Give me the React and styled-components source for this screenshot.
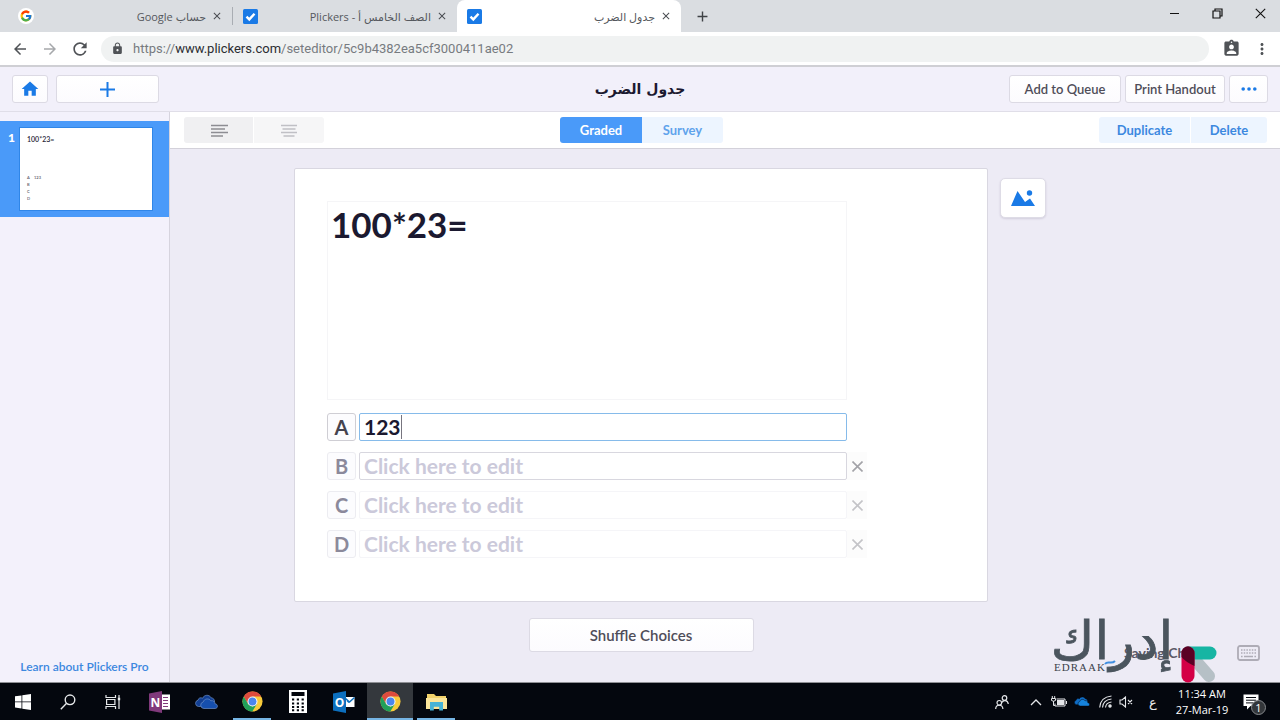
import React, { useState } from "react";
import styled, { createGlobalStyle } from "styled-components";
import { FcGoogle } from "react-icons/fc";
import {
  MdArrowBack,
  MdArrowForward,
  MdRefresh,
  MdLock,
  MdAssignmentInd,
  MdMoreVert,
  MdAdd,
  MdClose,
  MdHome,
} from "react-icons/md";

const GlobalStyle = createGlobalStyle`
  * { box-sizing: border-box; }
  body { margin: 0; overflow: hidden; }
  button, input, textarea { font-family: inherit; margin: 0; }
  button { padding: 0; border: 0; background: none; cursor: pointer; }
  svg { display: block; }
`;

const Screen = styled.div`
  position: relative;
  display: flex;
  flex-direction: column;
  height: 100vh;
  font-family: Lato, "DejaVu Sans", sans-serif;
  color: #1b1930;
  background: #edebf5;
`;

/* browser */

const TabBar = styled.div`
  display: flex;
  flex: none;
  height: 32px;
  padding-left: 8px;
  background: #dadde1;
  font-family: "Open Sans", "DejaVu Sans", sans-serif;
`;

const Tab = styled.div`
  display: flex;
  align-items: center;
  gap: 5px;
  width: 224px;
  padding: 0 9px 0 10px;
  border-radius: 8px 8px 0 0;
  background: ${(p) => (p.$active ? "#fff" : "none")};
  color: #55585d;
`;

const TabDivider = styled.div`
  width: 1px;
  height: 18px;
  margin: 7px 0;
  background: #a9adb3;
`;

const TabTitle = styled.span`
  flex: 1;
  font-size: 11px;
  white-space: nowrap;
`;

const TabClose = styled.button`
  display: flex;
  color: #4a4d52;
`;

const NewTab = styled.button`
  width: 42px;
  display: flex;
  align-items: center;
  justify-content: center;
  color: #3f4246;
`;

const WindowButtons = styled.div`
  display: flex;
  gap: 3px;
  margin-left: auto;
`;

const WindowButton = styled.button`
  display: flex;
  justify-content: center;
  width: 40px;
  height: 27px;
  align-items: center;
`;

const AddressBar = styled.div`
  display: flex;
  flex: none;
  align-items: center;
  height: 35px;
  padding: 0 9px;
  background: #fff;
  border-bottom: 2px solid #cfcfd4;
`;

const NavButton = styled.button`
  display: flex;
  justify-content: center;
  width: ${(p) => p.$width || 30}px;
  margin-left: ${(p) => p.$gap || 0}px;
  color: ${(p) => (p.$off ? "#a6a8ab" : "#505357")};
`;

const Url = styled.div`
  display: flex;
  flex: 1;
  align-items: center;
  gap: 9px;
  height: 26px;
  margin: 0 8px 0 10px;
  padding-left: 10px;
  border-radius: 13px;
  background: #f0f2f2;
  color: #777b80;
  font-family: Roboto, sans-serif;
  font-size: 13px;

  b { font-weight: 400; color: #2b2d31; }
`;

/* plickers header */

const Header = styled.header`
  display: grid;
  grid-template-columns: 1fr auto 1fr;
  flex: none;
  align-items: center;
  height: 45px;
  padding: 0 12px;
  background: #f2f0fa;
  border-bottom: 1px solid #e0dee8;
`;

const HeaderGroup = styled.div`
  display: flex;
  gap: ${(p) => p.$gap}px;
  justify-content: ${(p) => (p.$end ? "flex-end" : "flex-start")};
`;

const Title = styled.h1`
  margin: 0;
  font-family: "DejaVu Sans", sans-serif;
  font-size: 14px;
  font-weight: 700;
`;

const WhiteButton = styled.button`
  display: flex;
  align-items: center;
  justify-content: center;
  width: ${(p) => p.$width}px;
  height: ${(p) => p.$height || 28}px;
  border: 1px solid #dcdae4;
  border-radius: 3px;
  background: linear-gradient(#fff, #fcfbfe);
  color: ${(p) => (p.$blue ? "#1a7ae6" : "#4f4d59")};
  font-size: ${(p) => p.$font || 13}px;
  font-weight: 600;
  white-space: nowrap;
`;

/* body */

const Body = styled.div`
  display: flex;
  flex: 1;
  min-height: 0;
`;

const Sidebar = styled.aside`
  display: flex;
  flex-direction: column;
  flex: none;
  width: 170px;
  padding-top: 9px;
  background: #f3f1fb;
  border-right: 1px solid #d6d4de;
`;

const Slide = styled.button`
  display: flex;
  gap: 4px;
  padding: 6px 16px 6px 8px;
  background: #4a9af9;
  color: #fff;
  text-align: left;
`;

const SlideNumber = styled.span`
  width: 7px;
  padding-top: 4px;
  font-size: 12px;
  line-height: 14px;
  font-weight: 900;
`;

const Thumb = styled.span`
  display: flex;
  flex: 1;
  flex-direction: column;
  justify-content: space-between;
  height: 84px;
  padding: 7px 7px 8px;
  background: #fff;
  border: 1px solid #2f86e8;
  color: #2a2838;
  font-size: 7px;
  line-height: 8px;
  font-weight: 600;
`;

const ThumbChoices = styled.span`
  display: grid;
  grid-template-columns: 7px 1fr;
  font-size: 4px;
  line-height: 7px;
  color: #5c5a6b;
`;

const ProLink = styled.a`
  margin: auto 0 7px;
  font-size: 12px;
  line-height: 16px;
  font-weight: 600;
  text-align: center;
  text-decoration: none;
  color: #3c88df;
`;

const Main = styled.main`
  position: relative;
  display: flex;
  flex: 1;
  flex-direction: column;
  min-width: 0;
`;

const Toolbar = styled.div`
  display: grid;
  grid-template-columns: 1fr auto 1fr 168px;
  flex: none;
  align-items: center;
  height: 37px;
  padding: 0 13px 0 14px;
  background: #fff;
  border-bottom: 1px solid #d3d1da;
`;

const ToolGroup = styled.div`
  display: flex;
  gap: ${(p) => p.$gap || 0}px;
  overflow: hidden;
  border-radius: 3px;
  justify-self: ${(p) => (p.$end ? "end" : "start")};
  grid-column: ${(p) => (p.$end ? "3 / 5" : "auto")};
`;

const toolColors = {
  dark: ["#f0f0f2", "#8d8d93"],
  faint: ["#f6f6f7", "#c0c0c5"],
  active: ["#4a9af9", "#fff"],
  soft: ["#edf5ff", "#5fa3ec"],
  action: ["#edf5ff", "#3c88df"],
};

const ToolButton = styled.button`
  display: flex;
  align-items: center;
  justify-content: center;
  width: ${(p) => p.$width}px;
  height: 26px;
  background: ${(p) => toolColors[p.$kind][0]};
  color: ${(p) => toolColors[p.$kind][1]};
  font-size: 13px;
  font-weight: 700;
`;

const Canvas = styled.div`
  display: grid;
  grid-template-columns: 1fr minmax(0, 694px) 1fr;
  padding: 19px 168px 0 0;
  row-gap: 16px;
`;

const Card = styled.section`
  grid-column: 2;
  padding: 32px 140px 43px 32px;
  background: #fff;
  border: 1px solid #d9d7e1;
  border-radius: 2px;
`;

const Question = styled.textarea`
  display: block;
  width: 100%;
  height: 199px;
  margin-bottom: 13px;
  padding: 0 3px;
  border: 1px solid #f5f5f7;
  outline: 0;
  resize: none;
  color: #1b1930;
  font-size: 35px;
  line-height: 44px;
  font-weight: 700;
`;

const Choice = styled.div`
  display: flex;
  width: calc(100% + 20px);
  margin-top: 11px;
`;

const Letter = styled.label`
  flex: none;
  width: 29px;
  height: 28px;
  margin-right: 3px;
  border: 1px solid ${(p) => (p.$filled ? "#cfced4" : "#ececf1")};
  border-radius: 3px;
  background: #fcfcfe;
  color: ${(p) => (p.$filled ? "#45434f" : "#8b899b")};
  font-size: 20px;
  line-height: 26px;
  font-weight: 700;
  text-align: center;
`;

const Field = styled.div`
  position: relative;
  flex: 1;
`;

const borders = { focus: "#86bbea", hover: "#d8d7df", idle: "#f5f5f8" };

const Answer = styled.input`
  display: block;
  width: 100%;
  height: 28px;
  padding: 0 4px 2px;
  border: 1px solid ${(p) => borders[p.$look]};
  border-radius: 2px;
  outline: 0;
  color: #1b1930;
  font-size: 21px;
  font-weight: 700;

  &::placeholder { color: #cbc9da; opacity: 1; }
`;

const Caret = styled.span`
  position: absolute;
  top: 2px;
  left: 42px;
  width: 1px;
  height: 24px;
  background: #77757f;
`;

const RemoveChoice = styled.button`
  display: flex;
  align-items: center;
  justify-content: center;
  width: 20px;
  background: #fcfcfc;
  color: ${(p) => (p.$strong ? "#a3a3a8" : "#c4c4c8")};
  visibility: ${(p) => (p.$hidden ? "hidden" : "visible")};
`;

const ImageButton = styled.button`
  display: flex;
  align-items: center;
  justify-content: center;
  width: 46px;
  height: 40px;
  margin: 10px 0 0 12px;
  border: 1px solid #dedce6;
  border-radius: 5px;
  background: #fff;
  box-shadow: 0 1px 2px rgba(60, 50, 90, 0.15);
`;

const Shuffle = styled.div`
  grid-column: 2;
  display: flex;
  justify-content: center;
`;

/* floats over the canvas corner */
const Status = styled.div`
  position: absolute;
  right: 20px;
  bottom: 20px;
  display: flex;
  align-items: center;
  justify-content: space-between;
  width: 136px;
  color: #5b5967;
  font-size: 14px;
  line-height: 18px;
  font-weight: 700;
`;

const Watermark = styled.div`
  position: absolute;
  right: 62px;
  bottom: 37px;
  pointer-events: none;
`;

/* windows taskbar */

const Taskbar = styled.footer`
  display: flex;
  flex: none;
  height: 38px;
  background: #04070e;
  border-top: 1px solid #8f9095;
  color: #fff;
  font-family: "Open Sans", "DejaVu Sans", sans-serif;
`;

const Apps = styled.div`
  display: flex;
  margin-left: ${(p) => p.$gap || 0}px;
`;

const AppButton = styled.button`
  display: flex;
  align-items: center;
  justify-content: center;
  width: ${(p) => p.$width || 46}px;
  background-color: ${(p) => (p.$active ? "#34383d" : "transparent")};
  background-image: ${(p) => (p.$open ? "linear-gradient(#76b5e4, #76b5e4)" : "none")};
  background-repeat: no-repeat;
  background-position: center bottom;
  background-size: ${(p) => (p.$active ? 46 : 38)}px 2px;
`;

const Tray = styled.div`
  display: flex;
  align-items: center;
  margin-left: auto;
  padding-right: 12px;
`;

const TrayButton = styled.button`
  position: relative;
  display: flex;
  align-items: center;
  justify-content: center;
  width: ${(p) => p.$width}px;
  color: #e4e6e9;
  font-size: 13px;
`;

const Clock = styled.time`
  width: 64px;
  font-size: 11px;
  line-height: 16px;
  text-align: center;
  white-space: nowrap;
`;

const Count = styled.span`
  position: absolute;
  top: 6px;
  left: 17px;
  width: 15px;
  height: 15px;
  border: 1px solid #85888c;
  border-radius: 50%;
  background: #33363a;
  color: #fff;
  font-size: 11px;
  line-height: 13px;
`;

const CheckFavicon = () => (
  <svg width="15" height="15" viewBox="0 0 15 15">
    <rect width="15" height="15" rx="1.5" fill="#1a7ae6" />
    <path d="M3.5 7.6l2.8 2.8 5.2-5.6" fill="none" stroke="#fff" strokeWidth="2.4" />
  </svg>
);

const GoogleFavicon = () => (
  <svg width="16" height="16" viewBox="0 0 16 16">
    <circle cx="8" cy="8" r="8" fill="#fff" />
    <FcGoogle x="1.5" y="1.5" size={13} />
  </svg>
);

const LinesIcon = ({ center }) => (
  <svg width="18" height="13" viewBox="0 0 18 13" stroke="currentColor" strokeWidth="1.6">
    <path
      d={
        center
          ? "M1 1.5h16M2.5 5h13M1 8.5h16M3.5 12h11"
          : "M1 1.5h17M1 5h14M1 8.5h17M1 12h12"
      }
    />
  </svg>
);

const DotsIcon = () => (
  <svg width="16" height="4" viewBox="0 0 16 4" fill="#1a7ae6">
    <circle cx="2.2" cy="2" r="1.8" />
    <circle cx="8" cy="2" r="1.8" />
    <circle cx="13.8" cy="2" r="1.8" />
  </svg>
);

const PictureIcon = () => (
  <svg width="24" height="16" viewBox="0 0 24 16" fill="#1a7ae6">
    <path d="M0 16L6.5 1 14 12l5-3.5 5 7.5z" />
    <circle cx="18.5" cy="3" r="2.7" />
  </svg>
);

const KeyboardIcon = () => (
  <svg width="23" height="16" viewBox="0 0 23 16" fill="none" stroke="#aeacb6">
    <rect x="1" y="1" width="21" height="14" rx="2" strokeWidth="1.8" />
    <path d="M4 5h15M4 8h15" strokeWidth="1.5" strokeDasharray="1.5 1.2" />
    <path d="M4 11.5h1.6M7 11.5h9M17.4 11.5h1.6" strokeWidth="1.5" />
  </svg>
);

const EdraakLogo = () => (
  <svg width="168" height="80" viewBox="0 0 168 80">
    <text x="62" y="56" textAnchor="middle" fontFamily="DejaVu Sans" fontSize="53" fill="#4b555e" stroke="#4b555e" strokeWidth=".8">
      إدراك
    </text>
    <text x="4" y="68" fontFamily="Liberation Serif" fontSize="11" letterSpacing="1" fill="#3b424a">
      EDRAAK
    </text>
    <path d="M55 61c3-4 6 1 10-3" fill="none" stroke="#3f8ee0" strokeWidth="2" />
    <path d="M138 49l21 24" stroke="#b6c0c6" strokeWidth="12" strokeLinecap="round" />
    <path d="M138 50h22" stroke="#17b5a3" strokeWidth="13" strokeLinecap="round" />
    <path d="M138 50v23" stroke="#d40046" strokeWidth="13" strokeLinecap="round" />
    <path d="M131.500 50a6.500 6.500 0 0 1 13 0v13q-9-4-13-9z" fill="#5a0024" />
  </svg>
);

const ChromeIcon = () => (
  <svg width="21" height="21" viewBox="0 0 48 48">
    <circle cx="24" cy="24" r="23" fill="#f8cb3b" />
    <path d="M4 12.6A23 23 0 0 1 44 12.500H24L14 29.700z" fill="#dd4b3e" />
    <path d="M4 12.600A23 23 0 0 0 23.500 47L34 29.700 24 35.500 14 29.700z" fill="#21a05a" />
    <circle cx="24" cy="24" r="11.500" fill="#f3f3f3" />
    <circle cx="24" cy="24" r="9" fill="#4a86ee" />
  </svg>
);

const WindowsIcon = () => (
  <svg width="16" height="16" viewBox="0 0 16 16" fill="#fff">
    <path d="M0 2.300l6.500-.9v6.100H0zM7.300 1.300L16 0v7.500H7.300zM0 8.300h6.500v6.200L0 13.600zM7.300 8.300H16V16l-8.700-1.300z" />
  </svg>
);

const SearchIcon = () => (
  <svg width="16" height="16" viewBox="0 0 16 16" fill="none" stroke="#e6e8ea" strokeWidth="1.400">
    <circle cx="10" cy="5.800" r="4.800" />
    <path d="M6.600 9.300L.8 15.200" />
  </svg>
);

const TaskViewIcon = () => (
  <svg width="16" height="16" viewBox="0 0 16 16" fill="none" stroke="#e6e8ea" strokeWidth="1.200">
    <path d="M1 1v2.500h9.500V1M1 15v-2.500h9.500V15M1.600 5.500h8.300v5H1.600zM14 1v14" />
    <path d="M12.800 5h2.400" strokeWidth="2.500" />
  </svg>
);

const OneNoteIcon = () => (
  <svg width="22" height="22" viewBox="0 0 22 22">
    <rect x="11" y="3.500" width="10" height="15" fill="#fff" />
    <path d="M14 6.500h5M14 9.500h5M14 12.500h5M14 15.500h5" stroke="#80397b" strokeWidth="1" />
    <path d="M0 2.500L13 0v22L0 19.500z" fill="#80397b" />
    <text x="6.500" y="15.500" textAnchor="middle" fontFamily="Open Sans" fontWeight="700" fontSize="12" fill="#fff">N</text>
  </svg>
);

const OutlookIcon = () => (
  <svg width="22" height="22" viewBox="0 0 22 22">
    <rect x="11" y="6" width="10.500" height="10" fill="#fff" />
    <path d="M12 7l4.500 4 5-4.500M14 9.500l2 2" stroke="#0c6fbe" strokeWidth="1.500" fill="none" />
    <path d="M0 2.500L13 0v22L0 19.500z" fill="#0c6fbe" />
    <text x="6.500" y="15.500" textAnchor="middle" fontFamily="Open Sans" fontWeight="700" fontSize="12" fill="#fff">O</text>
  </svg>
);

const CloudIcon = ({ width = 23, back = "#123f94", front = "#164fae", line = "#6d8fc6" }) => (
  <svg width={width} height={(width * 15) / 23} viewBox="0 0 23 15" stroke={line} strokeWidth=".7">
    <path d="M5 12.500H3.500a3.200 3.200 0 0 1-.5-6.300C3.300 4 6 3 7.500 4.300 9 .8 14 0 16.200 3.800 18.500 4 20 6 19.500 8z" fill={back} />
    <path d="M9 14.500a3.300 3.300 0 0 1-.8-6.500c.5-3 5.500-4.500 7.600-1.200 2.500-.7 4.200 1 4.100 2.900 3.200.2 3.400 4.600.3 4.800z" fill={front} />
  </svg>
);

const CalculatorIcon = () => (
  <svg width="18" height="23" viewBox="0 0 18 23">
    <rect width="18" height="23" fill="#fff" />
    <rect x="2.500" y="2" width="13" height="4" fill="#04070e" />
    <path d="M3 9.500h12M3 13.500h12M3 17h12M3 20.300h12" stroke="#04070e" strokeWidth="2" strokeDasharray="2.200 2.600" />
  </svg>
);

const FolderIcon = () => (
  <svg width="21" height="18" viewBox="0 0 21 18">
    <path d="M1 1h7l2 2h10v13H1z" fill="#f2d26a" />
    <path d="M0 5h21v11H0z" fill="#fbe59a" />
    <path d="M4 9h13v8.500h-3.800v-3.700H7.800v3.700H4z" fill="#46b3d6" />
  </svg>
);

const PeopleIcon = () => (
  <svg width="14" height="14" viewBox="0 0 14 14" fill="none" stroke="currentColor" strokeWidth="1.200">
    <circle cx="9.500" cy="3" r="2.300" />
    <path d="M7 7.500c1-2.500 5.500-3 6.300 1.500" />
    <circle cx="4.300" cy="7.800" r="2.300" />
    <path d="M.7 14c0-5 7-5 7.200 0" />
  </svg>
);

const ChevronIcon = () => (
  <svg width="12" height="8" viewBox="0 0 12 8" fill="none" stroke="currentColor" strokeWidth="1.300">
    <path d="M1 7l5-5 5 5" />
  </svg>
);

const BatteryIcon = () => (
  <svg width="16" height="12" viewBox="0 0 16 12" fill="none" stroke="currentColor">
    <path d="M5.500 3h8.500v7H4V7.500M15.500 5v3M1.300 0v2M3.700 0v2" />
    <path d="M.5 2.500h4v2q-2 1.500-4 0zM2.500 5v4.500H4" />
    <path d="M6 6.500h7" strokeWidth="5" />
  </svg>
);

const WifiIcon = () => (
  <svg width="13" height="13" viewBox="0 0 13 13" fill="none" stroke="currentColor" strokeWidth="1.100">
    <path d="M.7 12.500Q1.500 2 12.500 1M3.500 12.500Q4 5 12.500 4M6.500 12.500Q7 7.700 12.500 7" />
    <circle cx="11" cy="11" r="1.200" fill="currentColor" />
  </svg>
);

const MutedIcon = () => (
  <svg width="14" height="12" viewBox="0 0 14 12" fill="none" stroke="currentColor" strokeWidth="1.100">
    <path d="M1 4h2l3.500-3v10L3 8H1zM9 4l4 4M13 4L9 8" />
  </svg>
);

const NotesIcon = () => (
  <svg width="16" height="16" viewBox="0 0 16 16">
    <path d="M.5.500h15v11.500h-8L4 15.500V12H.5z" fill="#fff" />
    <path d="M3 3.500h10M3 6.200h10M3 8.900h7" stroke="#04070e" />
  </svg>
);

const MinimizeIcon = () => (
  <svg width="11" height="11" viewBox="0 0 11 11" fill="none" stroke="#111">
    <path d="M1 5.500h9" />
  </svg>
);

const RestoreIcon = () => (
  <svg width="11" height="11" viewBox="0 0 11 11" fill="none" stroke="#111" strokeWidth="1.200">
    <path d="M1 3h7v7H1zM3 3V1h7v7H8" />
  </svg>
);

const QuitIcon = () => (
  <svg width="11" height="11" viewBox="0 0 11 11" fill="none" stroke="#111" strokeWidth="1.100">
    <path d="M.8.800l9.400 9.400M10.200.800L.8 10.200" />
  </svg>
);

const tabs = [
  { title: "حساب Google", icon: <GoogleFavicon /> },
  { title: "الصف الخامس أ - Plickers", icon: <CheckFavicon /> },
  { title: "جدول الضرب", icon: <CheckFavicon />, active: true },
];

const letters = ["A", "B", "C", "D"];

const looks = ["focus", "hover", "idle", "idle"];

const apps = [
  { name: "OneNote", icon: <OneNoteIcon /> },
  { name: "OneDrive", icon: <CloudIcon /> },
  { name: "Chrome", icon: <ChromeIcon />, open: true },
  { name: "Calculator", icon: <CalculatorIcon /> },
  { name: "Outlook", icon: <OutlookIcon /> },
  { name: "Chrome window", icon: <ChromeIcon />, open: true, active: true },
  { name: "Explorer", icon: <FolderIcon />, open: true },
];

const App = () => {
  const [question, setQuestion] = useState("100*23=");
  const [answers, setAnswers] = useState(["123", "", "", ""]);

  const changeAnswer = (index, value) => {
    setAnswers(answers.map((item, i) => (i === index ? value : item)));
  };

  return (
    <Screen>
      <GlobalStyle />
      <TabBar>
        {tabs.map((tab, i) => (
          <React.Fragment key={tab.title}>
            <Tab $active={tab.active}>
              {tab.icon}
              <TabTitle dir="rtl">{tab.title}</TabTitle>
              <TabClose aria-label="Close tab"><MdClose size={12} /></TabClose>
            </Tab>
            {i === 0 && <TabDivider />}
          </React.Fragment>
        ))}
        <NewTab aria-label="New tab"><MdAdd size={17} /></NewTab>
        <WindowButtons>
          <WindowButton aria-label="Minimize"><MinimizeIcon /></WindowButton>
          <WindowButton aria-label="Restore"><RestoreIcon /></WindowButton>
          <WindowButton aria-label="Close"><QuitIcon /></WindowButton>
        </WindowButtons>
      </TabBar>

      <AddressBar>
        <NavButton $width={22} aria-label="Back"><MdArrowBack size={18} /></NavButton>
        <NavButton $width={22} $gap={8} $off aria-label="Forward"><MdArrowForward size={18} /></NavButton>
        <NavButton $width={22} $gap={8} aria-label="Reload"><MdRefresh size={20} /></NavButton>
        <Url>
          <MdLock size={13} color="#505357" />
          <span>https://<b>www.plickers.com</b>/seteditor/5c9b4382ea5cf3000411ae02</span>
        </Url>
        <NavButton $width={28} aria-label="Profile"><MdAssignmentInd size={19} /></NavButton>
        <NavButton $width={18} $gap={8} aria-label="Menu"><MdMoreVert size={18} /></NavButton>
      </AddressBar>

      <Header>
        <HeaderGroup $gap={8}>
          <WhiteButton $width={36} $blue aria-label="Home"><MdHome size={20} /></WhiteButton>
          <WhiteButton $width={103} $blue aria-label="New question">
            <svg width="15" height="15" viewBox="0 0 15 15" stroke="currentColor" strokeWidth="2">
              <path d="M7.500 0v15M0 7.500h15" />
            </svg>
          </WhiteButton>
        </HeaderGroup>
        <Title dir="rtl">جدول الضرب</Title>
        <HeaderGroup $gap={4} $end>
          <WhiteButton $width={112}>Add to Queue</WhiteButton>
          <WhiteButton $width={100}>Print Handout</WhiteButton>
          <WhiteButton $width={39} aria-label="More"><DotsIcon /></WhiteButton>
        </HeaderGroup>
      </Header>

      <Body>
        <Sidebar>
          <Slide>
            <SlideNumber>1</SlideNumber>
            <Thumb>
              {question}
              <ThumbChoices>
                {letters.map((letter, i) => (
                  <React.Fragment key={letter}>
                    <span>{letter}</span>
                    <span>{answers[i]}</span>
                  </React.Fragment>
                ))}
              </ThumbChoices>
            </Thumb>
          </Slide>
          <ProLink href="#pro">Learn about Plickers Pro</ProLink>
        </Sidebar>

        <Main>
          <Toolbar>
            <ToolGroup $gap={1}>
              <ToolButton $width={69} $kind="dark" aria-label="Align left"><LinesIcon /></ToolButton>
              <ToolButton $width={70} $kind="faint" aria-label="Align center"><LinesIcon center /></ToolButton>
            </ToolGroup>
            <ToolGroup>
              <ToolButton $width={82} $kind="active">Graded</ToolButton>
              <ToolButton $width={81} $kind="soft">Survey</ToolButton>
            </ToolGroup>
            <ToolGroup $gap={1} $end>
              <ToolButton $width={91} $kind="action">Duplicate</ToolButton>
              <ToolButton $width={76} $kind="action">Delete</ToolButton>
            </ToolGroup>
          </Toolbar>

          <Canvas>
            <Card>
              <Question
                aria-label="Question"
                spellCheck={false}
                value={question}
                onChange={(e) => setQuestion(e.target.value)}
              />
              {letters.map((letter, i) => (
                <Choice key={letter}>
                  <Letter htmlFor={"answer" + letter} $filled={i === 0}>{letter}</Letter>
                  <Field>
                    <Answer
                      id={"answer" + letter}
                      $look={looks[i]}
                      placeholder="Click here to edit"
                      value={answers[i]}
                      onChange={(e) => changeAnswer(i, e.target.value)}
                    />
                    {i === 0 && <Caret />}
                  </Field>
                  <RemoveChoice $hidden={i === 0} $strong={i === 1} aria-label="Remove choice">
                    <svg width="11" height="11" viewBox="0 0 11 11" stroke="currentColor" strokeWidth="1.600">
                      <path d="M.5.500l10 10M10.500.500l-10 10" />
                    </svg>
                  </RemoveChoice>
                </Choice>
              ))}
            </Card>
            <ImageButton aria-label="Add image"><PictureIcon /></ImageButton>
            <Shuffle>
              <WhiteButton $width={225} $height={34} $font={15}>Shuffle Choices</WhiteButton>
            </Shuffle>
          </Canvas>

          <Status>
            <span>Saving Ch</span>
            <KeyboardIcon />
          </Status>
        </Main>
      </Body>

      <Watermark><EdraakLogo /></Watermark>

      <Taskbar>
        <Apps>
          <AppButton $width={45} aria-label="Start"><WindowsIcon /></AppButton>
          <AppButton $width={45} aria-label="Search"><SearchIcon /></AppButton>
          <AppButton $width={45} aria-label="Task view"><TaskViewIcon /></AppButton>
        </Apps>
        <Apps $gap={2}>
          {apps.map((app) => (
            <AppButton key={app.name} $open={app.open} $active={app.active} aria-label={app.name}>
              {app.icon}
            </AppButton>
          ))}
        </Apps>
        <Tray>
          <TrayButton $width={44} aria-label="People"><PeopleIcon /></TrayButton>
          <TrayButton $width={24} aria-label="Hidden icons"><ChevronIcon /></TrayButton>
          <TrayButton $width={22} aria-label="Battery"><BatteryIcon /></TrayButton>
          <TrayButton $width={24} aria-label="OneDrive status">
            <CloudIcon width={16} back="#0f6cc4" front="#1683dc" line="#04070e" />
          </TrayButton>
          <TrayButton $width={22} aria-label="Network"><WifiIcon /></TrayButton>
          <TrayButton $width={20} aria-label="Volume"><MutedIcon /></TrayButton>
          <TrayButton $width={34}>ع</TrayButton>
          <Clock>
            11:34 AM<br />27-Mar-19
          </Clock>
          <TrayButton $width={34} aria-label="Notifications">
            <NotesIcon />
            <Count>1</Count>
          </TrayButton>
        </Tray>
      </Taskbar>
    </Screen>
  );
};

export default App;
